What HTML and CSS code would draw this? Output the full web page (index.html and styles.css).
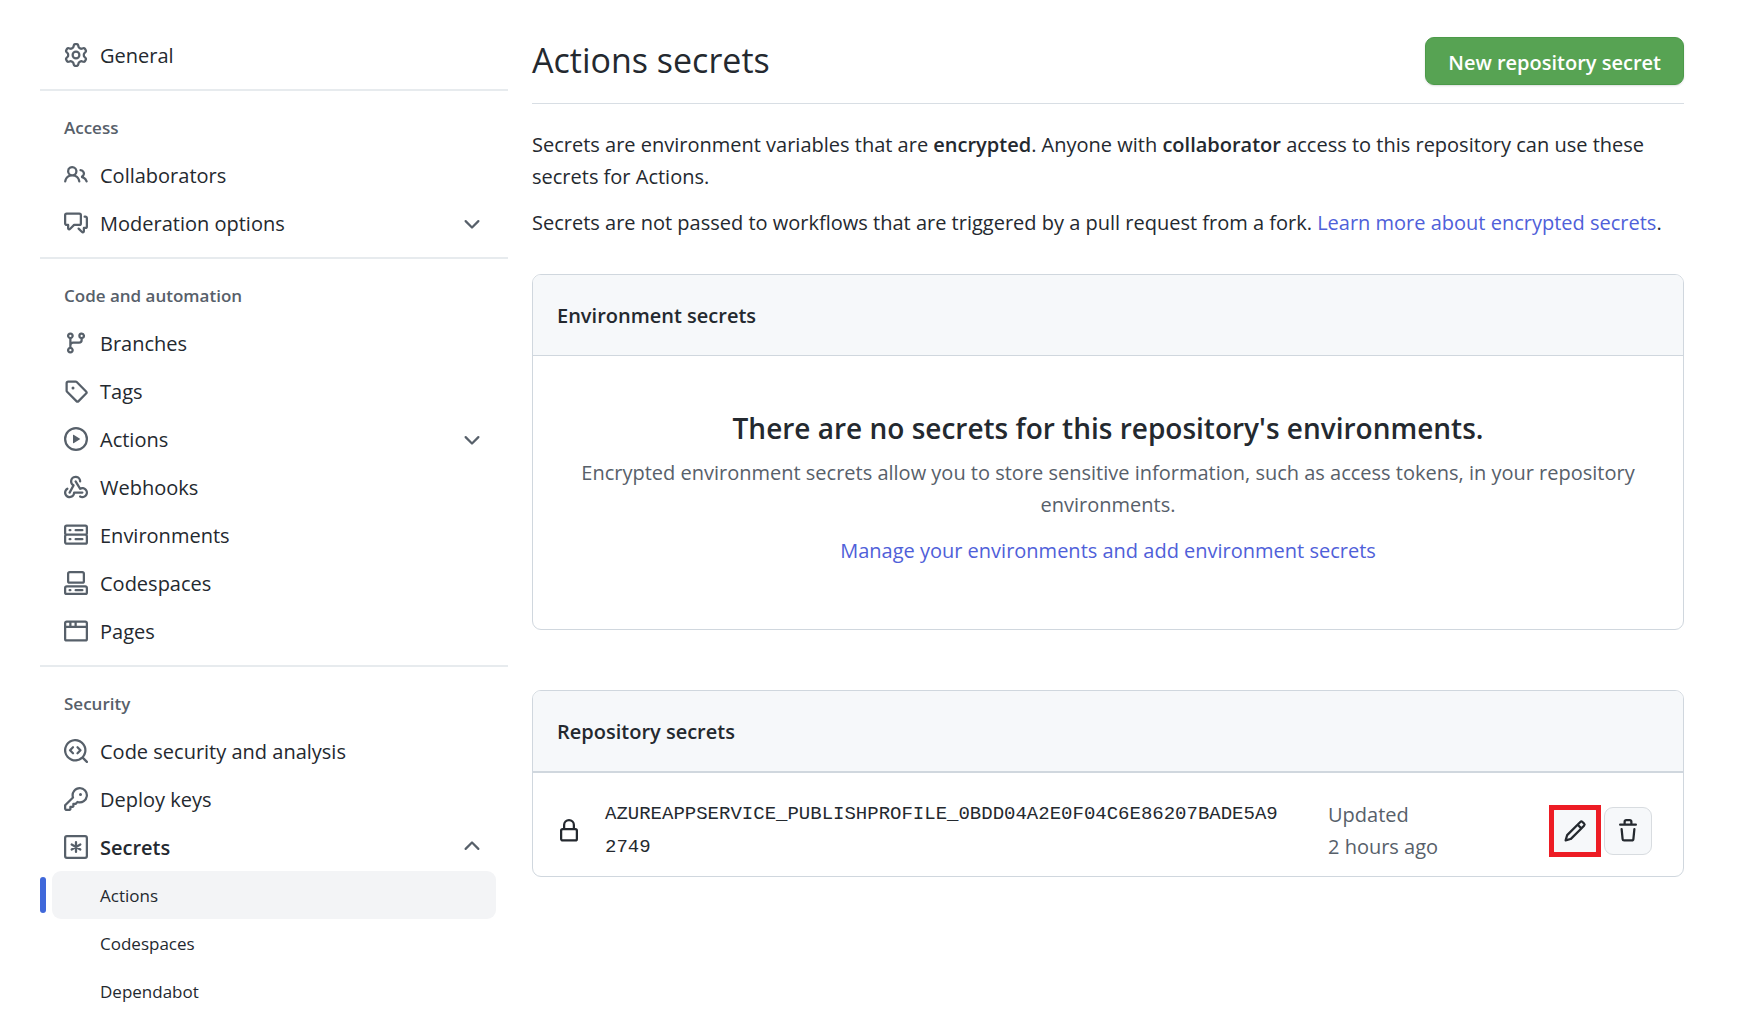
FILE: index.html
```html
<!DOCTYPE html>
<html lang="en">
<head>
<meta charset="utf-8">
<meta name="viewport" content="width=device-width, initial-scale=1">
<title>Actions secrets</title>
<link rel="stylesheet" href="styles.css">
</head>
<body>
<div class="layout">
  <nav class="sidebar" aria-label="Repository settings">
    <ul class="nav-list">
      <li><a class="nav-item" href="#general"><svg class="icon" viewBox="0 0 16 16" aria-hidden="true"><path d="M7.429 1.525a6.593 6.593 0 011.142 0c.036.003.108.036.137.146l.289 1.105c.147.56.55.967.997 1.189.174.086.341.183.501.29.417.278.97.423 1.53.27l1.102-.303c.11-.03.175.016.195.046.219.31.41.641.573.989.014.031.022.11-.059.19l-.815.806c-.411.406-.562.957-.53 1.456a4.588 4.588 0 010 .582c-.032.499.119 1.05.53 1.456l.815.806c.08.08.073.159.059.19a6.494 6.494 0 01-.573.99c-.02.029-.086.074-.195.045l-1.103-.303c-.559-.153-1.112-.008-1.529.27-.16.107-.327.204-.5.29-.449.222-.851.628-.998 1.189l-.289 1.105c-.029.11-.101.143-.137.146a6.613 6.613 0 01-1.142 0c-.036-.003-.108-.037-.137-.146l-.289-1.105c-.147-.56-.55-.967-.997-1.189a4.502 4.502 0 01-.501-.29c-.417-.278-.97-.423-1.53-.27l-1.102.303c-.11.03-.175-.016-.195-.046a6.492 6.492 0 01-.573-.989c-.014-.031-.022-.11.059-.19l.815-.806c.411-.406.562-.957.53-1.456a4.587 4.587 0 010-.582c.032-.499-.119-1.05-.53-1.456l-.815-.806c-.08-.08-.073-.159-.059-.19a6.44 6.44 0 01.573-.99c.02-.029.086-.075.195-.045l1.103.303c.559.153 1.112.008 1.529-.27.16-.107.327-.204.5-.29.449-.222.851-.628.998-1.189l.289-1.105c.029-.11.101-.143.137-.146zM8 0c-.236 0-.47.01-.701.03-.743.065-1.29.615-1.458 1.261l-.29 1.106c-.017.066-.078.158-.211.224a5.994 5.994 0 00-.668.386c-.123.082-.233.09-.3.071L3.27 2.776c-.644-.177-1.392.02-1.82.63a7.977 7.977 0 00-.704 1.217c-.315.675-.111 1.422.363 1.891l.815.806c.05.048.098.147.088.294a6.084 6.084 0 000 .772c.01.147-.038.246-.088.294l-.815.806c-.474.469-.678 1.216-.363 1.891.2.428.436.835.704 1.218.428.609 1.176.806 1.82.63l1.103-.303c.066-.019.176-.011.299.071.213.143.436.272.668.386.133.066.194.158.212.224l.289 1.106c.169.646.715 1.196 1.458 1.26a8.094 8.094 0 001.402 0c.743-.064 1.29-.614 1.458-1.26l.29-1.106c.017-.066.078-.158.211-.224a5.98 5.98 0 00.668-.386c.123-.082.233-.09.3-.071l1.102.302c.644.177 1.392-.02 1.82-.63.268-.382.505-.789.704-1.217.315-.675.111-1.422-.364-1.891l-.814-.806c-.05-.048-.098-.147-.088-.294a6.1 6.1 0 000-.772c-.01-.147.039-.246.088-.294l.814-.806c.475-.469.679-1.216.364-1.891a7.992 7.992 0 00-.704-1.218c-.428-.609-1.176-.806-1.82-.63l-1.103.303c-.066.019-.176.011-.299-.071a5.991 5.991 0 00-.668-.386c-.133-.066-.194-.158-.212-.224L10.16 1.29C9.99.645 9.444.095 8.701.031A8.094 8.094 0 008 0zm1.5 8a1.5 1.5 0 11-3 0 1.5 1.5 0 013 0zM11 8a3 3 0 11-6 0 3 3 0 016 0z"/></svg><span>General</span></a></li>
    </ul>

    <section class="nav-group">
      <h2 class="nav-heading">Access</h2>
      <ul class="nav-list">
        <li><a class="nav-item" href="#collaborators"><svg class="icon" viewBox="0 0 16 16" aria-hidden="true"><path d="M5.5 3.5a2 2 0 100 4 2 2 0 000-4zM2 5.5a3.5 3.5 0 115.898 2.549 5.507 5.507 0 013.034 4.084.75.75 0 11-1.482.235 4.001 4.001 0 00-7.9 0 .75.75 0 01-1.482-.236A5.507 5.507 0 013.102 8.05 3.49 3.49 0 012 5.5zM11 4a.75.75 0 100 1.5 1.5 1.5 0 01.666 2.844.75.75 0 00-.416.672v.352a.75.75 0 00.574.73c1.2.289 2.162 1.2 2.522 2.372a.75.75 0 101.434-.44 5.01 5.01 0 00-2.56-3.012A3 3 0 0011 4z"/></svg><span>Collaborators</span></a></li>
        <li><button class="nav-item" type="button" aria-expanded="false"><svg class="icon" viewBox="0 0 16 16" aria-hidden="true"><path d="M1.5 2.75a.25.25 0 01.25-.25h8.5a.25.25 0 01.25.25v5.5a.25.25 0 01-.25.25h-3.5a.75.75 0 00-.53.22L3.5 11.44V9.25a.75.75 0 00-.75-.75h-1a.25.25 0 01-.25-.25v-5.5zM1.75 1A1.75 1.75 0 000 2.75v5.5C0 9.216.784 10 1.75 10H2v1.543a1.457 1.457 0 002.487 1.03L7.061 10h3.189A1.75 1.75 0 0012 8.25v-5.5A1.75 1.75 0 0010.25 1h-8.5zM14.5 4.75a.25.25 0 00-.25-.25h-.5a.75.75 0 110-1.5h.5c.966 0 1.75.784 1.75 1.75v5.5A1.75 1.75 0 0114.25 12H14v1.543a1.457 1.457 0 01-2.487 1.03L9.22 12.28a.75.75 0 111.06-1.06l2.22 2.22v-2.19a.75.75 0 01.75-.75h1a.25.25 0 00.25-.25v-5.5z"/></svg><span>Moderation options</span><svg class="icon chevron" viewBox="0 0 16 16" aria-hidden="true"><path d="M12.78 6.22a.75.75 0 010 1.06l-4.25 4.25a.75.75 0 01-1.06 0L3.22 7.28a.75.75 0 011.06-1.06L8 9.94l3.72-3.72a.75.75 0 011.06 0z"/></svg></button></li>
      </ul>
    </section>

    <section class="nav-group">
      <h2 class="nav-heading">Code and automation</h2>
      <ul class="nav-list">
        <li><a class="nav-item" href="#branches"><svg class="icon" viewBox="0 0 16 16" aria-hidden="true"><path d="M11.75 2.5a.75.75 0 100 1.5.75.75 0 000-1.5zm-2.25.75a2.25 2.25 0 113 2.122V6A2.5 2.5 0 0110 8.5H6a1 1 0 00-1 1v1.128a2.251 2.251 0 11-1.5 0V5.372a2.25 2.25 0 111.5 0v1.836A2.492 2.492 0 016 7h4a1 1 0 001-1v-.628A2.25 2.25 0 019.5 3.25zM4.25 12a.75.75 0 100 1.5.75.75 0 000-1.5zM3.5 3.25a.75.75 0 111.5 0 .75.75 0 01-1.5 0z"/></svg><span>Branches</span></a></li>
        <li><a class="nav-item" href="#tags"><svg class="icon" viewBox="0 0 16 16" aria-hidden="true"><path d="M2.5 7.775V2.75a.25.25 0 01.25-.25h5.025a.25.25 0 01.177.073l6.25 6.25a.25.25 0 010 .354l-5.025 5.025a.25.25 0 01-.354 0l-6.25-6.25a.25.25 0 01-.073-.177zm-1.5 0V2.75C1 1.784 1.784 1 2.75 1h5.025c.464 0 .91.184 1.238.513l6.25 6.25a1.75 1.75 0 010 2.474l-5.026 5.026a1.75 1.75 0 01-2.474 0l-6.25-6.25A1.75 1.75 0 011 7.775zM6 5a1 1 0 100 2 1 1 0 000-2z"/></svg><span>Tags</span></a></li>
        <li><button class="nav-item" type="button" aria-expanded="false"><svg class="icon" viewBox="0 0 16 16" aria-hidden="true"><path d="M1.5 8a6.5 6.5 0 1113 0 6.5 6.5 0 01-13 0zM8 0a8 8 0 100 16A8 8 0 008 0zM6.379 5.227A.25.25 0 006 5.442v5.117a.25.25 0 00.379.214l4.264-2.559a.25.25 0 000-.428L6.379 5.227z"/></svg><span>Actions</span><svg class="icon chevron" viewBox="0 0 16 16" aria-hidden="true"><path d="M12.78 6.22a.75.75 0 010 1.06l-4.25 4.25a.75.75 0 01-1.06 0L3.22 7.28a.75.75 0 011.06-1.06L8 9.94l3.72-3.72a.75.75 0 011.06 0z"/></svg></button></li>
        <li><a class="nav-item" href="#webhooks"><svg class="icon" viewBox="0 0 16 16" aria-hidden="true"><path d="M5.5 4.25a2.25 2.25 0 014.5 0 .75.75 0 001.5 0 3.75 3.75 0 10-6.14 2.889l-2.272 4.258a.75.75 0 001.324.706L7 7.25a.75.75 0 00-.309-1.015A2.25 2.25 0 015.5 4.25z"/><path d="M7.364 3.607a.75.75 0 011.03.257l2.608 4.349a3.75 3.75 0 11-.628 6.785.75.75 0 01.752-1.299 2.25 2.25 0 10-.033-3.88.75.75 0 01-1.03-.256L7.107 4.636a.75.75 0 01.257-1.03z"/><path d="M2.9 8.776A.75.75 0 012.625 9.8 2.25 2.25 0 106 11.75a.75.75 0 01.75-.751h5.5a.75.75 0 010 1.5H7.425a3.751 3.751 0 11-5.55-3.998.75.75 0 011.024.274z"/></svg><span>Webhooks</span></a></li>
        <li><a class="nav-item" href="#environments"><svg class="icon" viewBox="0 0 16 16" aria-hidden="true"><path d="M1.75 1A1.75 1.75 0 000 2.75v4c0 .372.116.717.314 1a1.742 1.742 0 00-.314 1v4c0 .966.784 1.75 1.75 1.75h12.5A1.75 1.75 0 0016 12.75v-4c0-.372-.116-.717-.314-1 .198-.283.314-.628.314-1v-4A1.75 1.75 0 0014.25 1H1.75zm0 7.5a.25.25 0 00-.25.25v4c0 .138.112.25.25.25h12.5a.25.25 0 00.25-.25v-4a.25.25 0 00-.25-.25H1.75zM14.25 7a.25.25 0 00.25-.25v-4a.25.25 0 00-.25-.25H1.75a.25.25 0 00-.25.25v4c0 .138.112.25.25.25h12.5zM7 4.75A.75.75 0 017.75 4h4.5a.75.75 0 010 1.5h-4.5A.75.75 0 017 4.75zM7.75 10a.75.75 0 000 1.5h4.5a.75.75 0 000-1.5h-4.5zM3 4.75A.75.75 0 013.75 4h.5a.75.75 0 010 1.5h-.5A.75.75 0 013 4.75zM3.75 10a.75.75 0 000 1.5h.5a.75.75 0 000-1.5h-.5z"/></svg><span>Environments</span></a></li>
        <li><a class="nav-item" href="#codespaces"><svg class="icon" viewBox="0 0 16 16" aria-hidden="true"><path d="M2 1.75C2 .784 2.784 0 3.75 0h8.5C13.216 0 14 .784 14 1.75v5A1.75 1.75 0 0112.25 8.5h-8.5A1.75 1.75 0 012 6.75v-5zm1.75-.25a.25.25 0 00-.25.25v5c0 .138.112.25.25.25h8.5a.25.25 0 00.25-.25v-5a.25.25 0 00-.25-.25h-8.5zM0 11.25c0-.966.784-1.75 1.75-1.75h12.5c.966 0 1.75.784 1.75 1.75v3A1.75 1.75 0 0114.25 16H1.75A1.75 1.75 0 010 14.25v-3zM1.75 11a.25.25 0 00-.25.25v3c0 .138.112.25.25.25h12.5a.25.25 0 00.25-.25v-3a.25.25 0 00-.25-.25H1.75zM3 12.75a.75.75 0 01.75-.75h.5a.75.75 0 010 1.5h-.5a.75.75 0 01-.75-.75zM7 12.75a.75.75 0 01.75-.75h4.5a.75.75 0 010 1.5h-4.5a.75.75 0 01-.75-.75z"/></svg><span>Codespaces</span></a></li>
        <li><a class="nav-item" href="#pages"><svg class="icon" viewBox="0 0 16 16" aria-hidden="true"><path d="M0 2.75C0 1.784.784 1 1.75 1h12.5c.966 0 1.75.784 1.75 1.75v10.5A1.75 1.75 0 0114.25 15H1.75A1.75 1.75 0 010 13.25V2.75zm1.75-.25a.25.25 0 00-.25.25V4.5h2v-2H1.75zM5 2.5v2h2v-2H5zm3.5 0v2h6V2.75a.25.25 0 00-.25-.25H8.5zm6 3.5h-13v7.25c0 .138.112.25.25.25h12.5a.25.25 0 00.25-.25V6z"/></svg><span>Pages</span></a></li>
      </ul>
    </section>

    <section class="nav-group">
      <h2 class="nav-heading">Security</h2>
      <ul class="nav-list">
        <li><a class="nav-item" href="#code-security"><svg class="icon" viewBox="0 0 16 16" aria-hidden="true"><path d="M8.47 4.97a.75.75 0 000 1.06L9.94 7.5 8.47 8.97a.75.75 0 101.06 1.06l2-2a.75.75 0 000-1.06l-2-2a.75.75 0 00-1.06 0zM6.53 6.03a.75.75 0 00-1.06-1.06l-2 2a.75.75 0 000 1.06l2 2a.75.75 0 101.06-1.06L5.06 7.5l1.47-1.47z"/><path d="M12.246 13.307a7.5 7.5 0 111.06-1.06l2.474 2.473a.75.75 0 11-1.06 1.06l-2.474-2.473zM1.5 7.5a6 6 0 1110.386 4.094.75.75 0 00-.292.293A6 6 0 011.5 7.5z"/></svg><span>Code security and analysis</span></a></li>
        <li><a class="nav-item" href="#deploy-keys"><svg class="icon" viewBox="0 0 16 16" aria-hidden="true"><path d="M6.5 5.5a4 4 0 112.731 3.795.75.75 0 00-.768.18L7.44 10.5H6.25a.75.75 0 00-.75.75v1.19l-.06.06H4.25a.75.75 0 00-.75.75v1.19l-.06.06H1.75a.25.25 0 01-.25-.25v-1.69l5.024-5.023a.75.75 0 00.181-.768A3.995 3.995 0 016.5 5.5zm4-5.5a5.5 5.5 0 00-5.348 6.788L.22 11.72a.75.75 0 00-.22.53v2C0 15.216.784 16 1.75 16h2a.75.75 0 00.53-.22l.5-.5a.75.75 0 00.22-.53V14h.75a.75.75 0 00.53-.22l.5-.5a.75.75 0 00.22-.53V12h.75a.75.75 0 00.53-.22l.932-.932A5.5 5.5 0 1010.5 0zm.5 6a1 1 0 100-2 1 1 0 000 2z"/></svg><span>Deploy keys</span></a></li>
        <li>
          <button class="nav-item nav-item-open" type="button" aria-expanded="true"><svg class="icon icon-stroke" viewBox="0 0 16 16" aria-hidden="true"><rect x=".75" y=".75" width="14.5" height="14.5" rx="1.2"/><path d="M8 4.7v6.6M5.1 6.3l5.8 3.4M5.1 9.7l5.8-3.4"/></svg><span>Secrets</span><svg class="icon chevron" viewBox="0 0 16 16" aria-hidden="true"><path d="M3.22 9.78a.75.75 0 010-1.06l4.25-4.25a.75.75 0 011.06 0l4.25 4.25a.75.75 0 01-1.06 1.06L8 6.06 4.28 9.78a.75.75 0 01-1.06 0z"/></svg></button>
          <ul class="nav-list">
            <li><a class="nav-item nav-subitem nav-current" href="#secrets-actions" aria-current="page"><span>Actions</span></a></li>
            <li><a class="nav-item nav-subitem" href="#secrets-codespaces"><span>Codespaces</span></a></li>
            <li><a class="nav-item nav-subitem" href="#secrets-dependabot"><span>Dependabot</span></a></li>
          </ul>
        </li>
      </ul>
    </section>
  </nav>

  <main class="content">
    <header class="page-header">
      <h1 class="page-title">Actions secrets</h1>
      <button class="btn-primary" type="button">New repository secret</button>
    </header>

    <p class="intro">Secrets are environment variables that are <strong>encrypted</strong>. Anyone with <strong>collaborator</strong> access to this repository can use these secrets for Actions.</p>
    <p class="intro">Secrets are not passed to workflows that are triggered by a pull request from a fork. <a class="link" href="#learn-more">Learn more about encrypted secrets</a>.</p>

    <section class="card">
      <h2 class="card-header">Environment secrets</h2>
      <div class="blank">
        <h3 class="blank-title">There are no secrets for this repository's environments.</h3>
        <p class="blank-text">Encrypted environment secrets allow you to store sensitive information, such as access tokens, in your repository environments.</p>
        <p class="blank-action"><a class="link" href="#environments">Manage your environments and add environment secrets</a></p>
      </div>
    </section>

    <section class="card card-list">
      <h2 class="card-header">Repository secrets</h2>
      <div class="secret">
        <svg class="icon icon-dark" viewBox="0 0 16 16" aria-hidden="true"><path d="M4 4v2h-.25A1.75 1.75 0 002 7.75v5.5c0 .966.784 1.75 1.75 1.75h8.5A1.75 1.75 0 0014 13.25v-5.5A1.75 1.75 0 0012.25 6H12V4a4 4 0 10-8 0zm6.5 2V4a2.5 2.5 0 10-5 0v2h5zM12 7.5h.25a.25.25 0 01.25.25v5.5a.25.25 0 01-.25.25h-8.5a.25.25 0 01-.25-.25v-5.5a.25.25 0 01.25-.25H12z"/></svg>
        <code class="secret-name">AZUREAPPSERVICE_PUBLISHPROFILE_0BDD04A2E0F04C6E86207BADE5A92749</code>
        <div class="secret-updated">Updated<br>2 hours ago</div>
        <div class="secret-actions">
          <button class="btn-icon btn-marked" type="button" aria-label="Update secret"><svg class="icon icon-dark" viewBox="0 0 16 16" aria-hidden="true"><path d="M11.013 1.427a1.75 1.75 0 012.474 0l1.086 1.086a1.75 1.75 0 010 2.474l-8.61 8.61c-.21.21-.47.364-.756.445l-3.251.93a.75.75 0 01-.927-.928l.929-3.25a1.75 1.75 0 01.445-.758l8.61-8.61zm1.414 1.06a.25.25 0 00-.354 0L10.811 3.75l1.439 1.44 1.263-1.263a.25.25 0 000-.354l-1.086-1.086zM11.189 6.25L9.75 4.81l-6.286 6.287a.25.25 0 00-.064.108l-.558 1.953 1.953-.558a.249.249 0 00.108-.064l6.286-6.286z"/></svg></button>
          <button class="btn-icon" type="button" aria-label="Remove secret"><svg class="icon icon-dark" viewBox="0 0 16 16" aria-hidden="true"><path d="M6.5 1.75a.25.25 0 01.25-.25h2.5a.25.25 0 01.25.25V3h-3V1.75zm4.5 0V3h2.25a.75.75 0 010 1.5H2.75a.75.75 0 010-1.5H5V1.75C5 .784 5.784 0 6.75 0h2.5C10.216 0 11 .784 11 1.75zM4.496 6.675a.75.75 0 10-1.492.15l.66 6.6A1.75 1.75 0 005.405 15h5.19c.9 0 1.652-.681 1.741-1.576l.66-6.6a.75.75 0 00-1.492-.149l-.66 6.6a.25.25 0 01-.249.225h-5.19a.25.25 0 01-.249-.225l-.66-6.6z"/></svg></button>
        </div>
      </div>
    </section>
  </main>
</div>
</body>
</html>
```
FILE: styles.css
```css
*, *::before, *::after { box-sizing: border-box; }

body {
  margin: 0;
  background: #fff;
  color: #24292f;
  font-family: "Open Sans", "Noto Sans", sans-serif;
  font-size: 20px;
  line-height: 32px;
}

h1, h2, h3, p, ul { margin: 0; padding: 0; }
ul { list-style: none; }
strong { font-weight: 600; }
button { font: inherit; color: inherit; cursor: pointer; }

.layout {
  display: flex;
  align-items: flex-start;
  gap: 24px;
  padding: 31px 71px 0 40px;
}

.icon {
  flex: none;
  width: 24px;
  height: 24px;
  fill: #57606a;
  fill-rule: evenodd;
}
.icon-dark { fill: #24292f; }
.icon-stroke { fill: none; stroke: #57606a; stroke-width: 1.5; stroke-linecap: round; }

.link { color: #4f60d9; text-decoration: none; }
.link:hover { text-decoration: underline; }

/* Sidebar */
.sidebar { flex: 0 0 468px; }

.nav-group {
  margin-top: 10px;
  border-top: 2px solid #e7ebee;
}

.nav-heading {
  padding: 23px 24px 10px;
  color: #57606a;
  font-size: 17px;
  font-weight: 600;
  line-height: 27px;
}

.nav-list { padding: 0 12px; }
.nav-list .nav-list { padding: 0; }

.nav-item {
  display: flex;
  align-items: center;
  gap: 12px;
  width: 100%;
  height: 48px;
  padding: 0 12px;
  border: 0;
  border-radius: 9px;
  background: none;
  color: #24292f;
  text-align: left;
  text-decoration: none;
}
.nav-item span { padding-top: 2px; }
.nav-item:hover { background: #f3f4f6; }
.nav-item-open { font-weight: 600; }
.chevron { margin-left: auto; }

.nav-subitem { padding-left: 48px; font-size: 17px; }
.nav-current { position: relative; background: #f3f4f6; }
.nav-current::before {
  content: "";
  position: absolute;
  left: -12px;
  top: 6px;
  bottom: 6px;
  width: 6px;
  border-radius: 3px;
  background: #4068da;
}

/* Page */
.content { flex: 1; min-width: 0; }

.page-header {
  display: flex;
  align-items: flex-start;
  justify-content: space-between;
  padding: 6px 0 18px;
  margin-bottom: 25px;
  border-bottom: 1px solid #d8dee4;
}
.page-title { font-size: 34px; font-weight: 400; line-height: 46px; }

.btn-primary {
  height: 48px;
  padding: 3px 22px 0;
  border: 1px solid #4c9a49;
  border-radius: 9px;
  background: #57a353;
  box-shadow: 0 1px 2px rgba(27, 31, 36, 0.15);
  color: #fff;
  font-weight: 600;
}

.intro { margin-bottom: 14px; }

/* Cards */
.card {
  margin-top: 35px;
  border: 1px solid #d0d7de;
  border-radius: 9px;
  overflow: hidden;
}
.card + .card { margin-top: 60px; }

.card-header {
  padding: 25px 24px 23px;
  border-bottom: 1px solid #d0d7de;
  background: #f6f8fa;
  font-size: 20px;
  font-weight: 600;
}
.card-list .card-header { border-bottom-width: 2px; }

.blank { padding: 50px 48px 62px; text-align: center; }
.blank-title { font-size: 28px; font-weight: 600; line-height: 45px; margin-bottom: 6px; }
.blank-text { color: #57606a; margin-bottom: 14px; }

.secret {
  display: flex;
  align-items: center;
  padding: 25px 31px 12px 24px;
}
.secret-name {
  flex: 0 1 680px;
  min-width: 0;
  margin: 0 43px 0 24px;
  font-family: "Liberation Mono", monospace;
  font-size: 19px;
  line-height: 33px;
  overflow-wrap: anywhere;
}
.secret-updated { color: #57606a; white-space: nowrap; }
.secret-actions { display: flex; gap: 5px; margin-left: auto; }

.btn-icon {
  position: relative;
  display: flex;
  align-items: center;
  justify-content: center;
  width: 48px;
  height: 48px;
  padding: 0;
  border: 1px solid #d8dce0;
  border-radius: 9px;
  background: #f6f8fa;
}
/* Marker drawn over the button */
.btn-marked::after {
  content: "";
  position: absolute;
  inset: -3px;
  border: 5px solid #ed1c24;
}
```
